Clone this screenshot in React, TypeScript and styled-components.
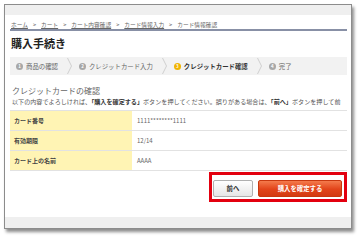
import styled, { createGlobalStyle } from "styled-components";

const GlobalStyle = createGlobalStyle`
  html, body {
    margin: 0;
    padding: 0;
    background: #ffffff;
  }
  body {
    font-family: "Noto Sans CJK JP", "Noto Sans", sans-serif;
  }
`;

const Page = styled.div`
  padding: 4px 0 0 4px;
  width: 363px;
  height: 240px;
  box-sizing: border-box;
`;

const Frame = styled.div`
  width: 348px;
  height: 225px;
  box-sizing: border-box;
  border: 1px solid #8c8c8c;
  background: #ffffff;
  box-shadow: 2px 3px 3px rgba(0, 0, 0, 0.45);
  display: flex;
  flex-direction: column;
  overflow: hidden;
`;

const Strip = styled.div`
  height: 10px;
  flex-shrink: 0;
  background: #efefef;
`;

const BottomStrip = styled(Strip)`
  margin-top: auto;
  height: 11px;
`;

const Content = styled.div`
  padding: 0 4px 0 5px;
`;

const Breadcrumb = styled.div`
  height: 16px;
  box-sizing: border-box;
  padding: 5px 0 0 1px;
  line-height: 10px;
  font-size: 5.7px;
  color: #666;
  border-bottom: 2px solid #8890a6;
  white-space: nowrap;
`;

const Crumb = styled.span<{ $link?: boolean }>`
  text-decoration: ${(p) => (p.$link ? "underline" : "none")};
`;

const Sep = styled.span`
  margin: 0 5px;
`;

const Title = styled.h1`
  margin: 0;
  height: 26px;
  line-height: 24px;
  padding-left: 1px;
  font-size: 11px;
  font-weight: 700;
  color: #222;
`;

const Steps = styled.div`
  height: 18px;
  background: #f2f2f2;
  display: flex;
  align-items: center;
  padding-left: 6px;
  font-size: 6.4px;
  color: #555;
  white-space: nowrap;
`;

const Step = styled.div<{ $active?: boolean }>`
  display: flex;
  align-items: center;
  gap: 3px;
  font-weight: ${(p) => (p.$active ? 700 : 400)};
  color: ${(p) => (p.$active ? "#333" : "#666")};
`;

const StepNum = styled.span<{ $active?: boolean }>`
  width: 7px;
  height: 7px;
  border-radius: 50%;
  background: ${(p) => (p.$active ? "#f0b400" : "#a8a8a8")};
  color: #fff;
  font-size: 4.5px;
  font-weight: 700;
  line-height: 7px;
  text-align: center;
`;

const Chevron = styled.svg`
  margin: 0 7px 0 6px;
  flex-shrink: 0;
`;

const SectionTitle = styled.h2`
  margin: 9px 0 0 2px;
  height: 14px;
  line-height: 14px;
  font-size: 8px;
  font-weight: 400;
  color: #666;
`;

const Lead = styled.p`
  margin: 0 0 0 2px;
  height: 8px;
  line-height: 8px;
  font-size: 6.1px;
  color: #555;
  white-space: nowrap;
  b {
    color: #333;
  }
`;

const Table = styled.table`
  margin-top: 4px;
  width: 100%;
  border-collapse: collapse;
  font-size: 6px;
`;

const Row = styled.tr`
  height: 20px;
  border-bottom: 1px solid #e2e2e2;
  &:first-child {
    border-top: 1px solid #e2e2e2;
  }
`;

const Head = styled.th`
  width: 118px;
  padding: 0 0 0 4px;
  text-align: left;
  background: #fff4b4;
  color: #444;
  font-weight: 700;
`;

const Cell = styled.td`
  padding: 0 0 0 5px;
  color: #666;
`;

const Actions = styled.div`
  display: flex;
  justify-content: flex-end;
  margin-top: 1px;
`;

const Highlight = styled.div`
  border: 3px solid #e3000f;
  padding: 5px 2px 2px 1px;
  display: flex;
  gap: 5px;
`;

const Button = styled.button<{ $primary?: boolean }>`
  height: 17px;
  width: ${(p) => (p.$primary ? "84px" : "40px")};
  padding: 0;
  border-radius: 2px;
  font-family: inherit;
  font-size: 6.4px;
  font-weight: 700;
  color: ${(p) => (p.$primary ? "#fff" : "#333")};
  border: 1px solid ${(p) => (p.$primary ? "#c8380f" : "#b0b0b0")};
  background: ${(p) =>
    p.$primary
      ? "linear-gradient(#f47a4c, #e2441a 55%, #d33a12)"
      : "linear-gradient(#ffffff, #e6e6e6)"};
`;

const steps = ["商品の確認", "クレジットカード入力", "クレジットカード確認", "完了"];
const crumbs = ["ホーム", "カート", "カート内容確認", "カード情報入力", "カード情報確認"];
const rows = [
  ["カード番号", "1111********1111"],
  ["有効期限", "12/14"],
  ["カード上の名前", "AAAA"],
];

function App(): JSX.Element {
  return (
    <Page>
      <GlobalStyle />
      <Frame>
        <Strip />
        <Content>
          <Breadcrumb>
            {crumbs.map((c, i) => (
              <span key={c}>
                <Crumb $link={i < crumbs.length - 1}>{c}</Crumb>
                {i < crumbs.length - 1 && <Sep>&gt;</Sep>}
              </span>
            ))}
          </Breadcrumb>
          <Title>購入手続き</Title>
          <Steps>
            {steps.map((s, i) => (
              <Step key={s} $active={i === 2}>
                <StepNum $active={i === 2}>{i + 1}</StepNum>
                {s}
                {i < steps.length - 1 && (
                  <Chevron width="5" height="16" viewBox="0 0 5 16">
                    <polyline points="0.5,0 4.5,8 0.5,16" fill="none" stroke="#cfcfcf" strokeWidth="1" />
                  </Chevron>
                )}
              </Step>
            ))}
          </Steps>
          <SectionTitle>クレジットカードの確認</SectionTitle>
          <Lead>
            以下の内容でよろしければ、<b>「購入を確定する」</b>ボタンを押してください。誤りがある場合は、<b>「前へ」</b>ボタンを押して前
          </Lead>
          <Table>
            <tbody>
              {rows.map(([k, v]) => (
                <Row key={k}>
                  <Head>{k}</Head>
                  <Cell>{v}</Cell>
                </Row>
              ))}
            </tbody>
          </Table>
          <Actions>
            <Highlight>
              <Button>前へ</Button>
              <Button $primary>購入を確定する</Button>
            </Highlight>
          </Actions>
        </Content>
        <BottomStrip />
      </Frame>
    </Page>
  );
}

export default App;
